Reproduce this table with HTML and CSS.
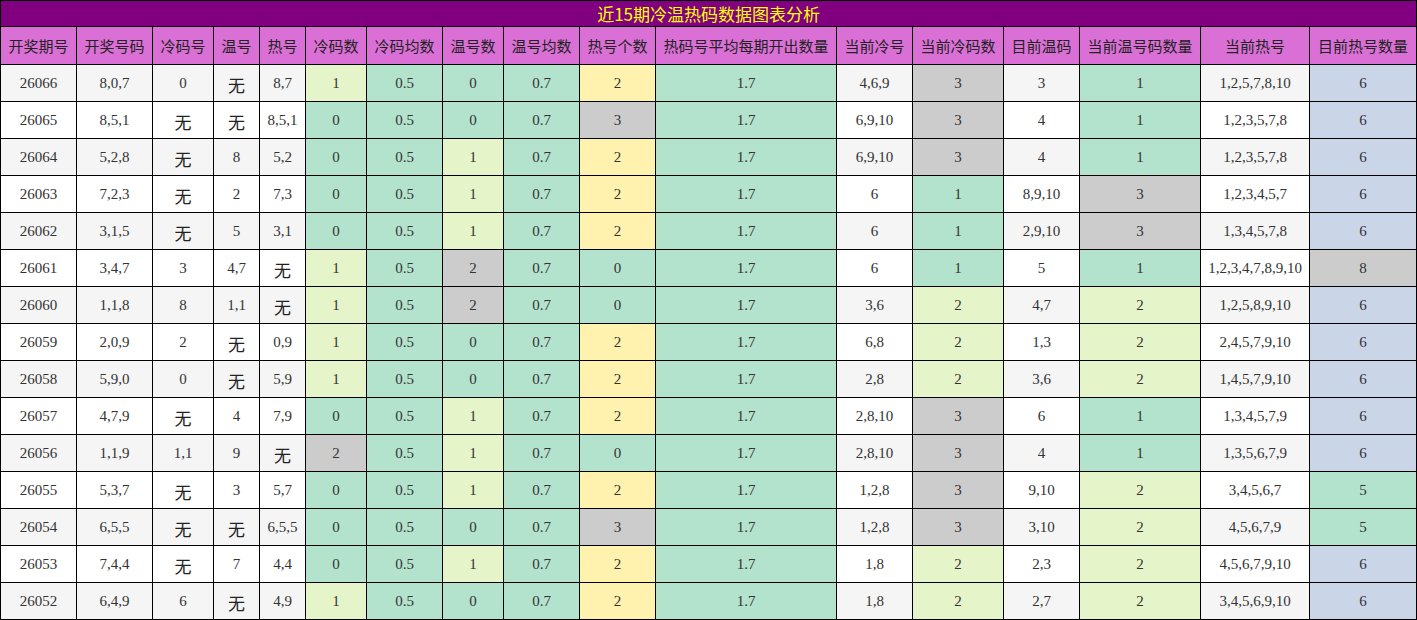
FILE: index.html
```html
<!DOCTYPE html>
<html lang="zh">
<head>
<meta charset="utf-8">
<title>近15期冷温热码数据图表分析</title>
<link rel="stylesheet" href="styles.css">
</head>
<body>
<table class="chart">
<colgroup>
<col class="w76"><col class="w76"><col class="w61"><col class="w46"><col class="w46"><col class="w61"><col class="w76"><col class="w61"><col class="w76"><col class="w76"><col class="w181"><col class="w76"><col class="w91"><col class="w76"><col class="w121"><col class="w109"><col class="w107">
</colgroup>
<thead>
<tr class="title"><th colspan="17">近15期冷温热码数据图表分析</th></tr>
<tr class="head">
<th>开奖期号</th><th>开奖号码</th><th>冷码号</th><th>温号</th><th>热号</th><th>冷码数</th><th>冷码均数</th><th>温号数</th><th>温号均数</th><th>热号个数</th><th>热码号平均每期开出数量</th><th>当前冷号</th><th>当前冷码数</th><th>目前温码</th><th>当前温号码数量</th><th>当前热号</th><th>目前热号数量</th>
</tr>
</thead>
<tbody>
<tr class="odd"><td>26066</td><td>8,0,7</td><td>0</td><td class="none">无</td><td>8,7</td><td class="g">1</td><td class="m">0.5</td><td class="m">0</td><td class="m">0.7</td><td class="y">2</td><td class="m">1.7</td><td>4,6,9</td><td class="k">3</td><td>3</td><td class="m">1</td><td>1,2,5,7,8,10</td><td class="b">6</td></tr>
<tr><td>26065</td><td>8,5,1</td><td class="none">无</td><td class="none">无</td><td>8,5,1</td><td class="m">0</td><td class="m">0.5</td><td class="m">0</td><td class="m">0.7</td><td class="k">3</td><td class="m">1.7</td><td>6,9,10</td><td class="k">3</td><td>4</td><td class="m">1</td><td>1,2,3,5,7,8</td><td class="b">6</td></tr>
<tr class="odd"><td>26064</td><td>5,2,8</td><td class="none">无</td><td>8</td><td>5,2</td><td class="m">0</td><td class="m">0.5</td><td class="g">1</td><td class="m">0.7</td><td class="y">2</td><td class="m">1.7</td><td>6,9,10</td><td class="k">3</td><td>4</td><td class="m">1</td><td>1,2,3,5,7,8</td><td class="b">6</td></tr>
<tr><td>26063</td><td>7,2,3</td><td class="none">无</td><td>2</td><td>7,3</td><td class="m">0</td><td class="m">0.5</td><td class="g">1</td><td class="m">0.7</td><td class="y">2</td><td class="m">1.7</td><td>6</td><td class="m">1</td><td>8,9,10</td><td class="k">3</td><td>1,2,3,4,5,7</td><td class="b">6</td></tr>
<tr class="odd"><td>26062</td><td>3,1,5</td><td class="none">无</td><td>5</td><td>3,1</td><td class="m">0</td><td class="m">0.5</td><td class="g">1</td><td class="m">0.7</td><td class="y">2</td><td class="m">1.7</td><td>6</td><td class="m">1</td><td>2,9,10</td><td class="k">3</td><td>1,3,4,5,7,8</td><td class="b">6</td></tr>
<tr><td>26061</td><td>3,4,7</td><td>3</td><td>4,7</td><td class="none">无</td><td class="g">1</td><td class="m">0.5</td><td class="k">2</td><td class="m">0.7</td><td class="m">0</td><td class="m">1.7</td><td>6</td><td class="m">1</td><td>5</td><td class="m">1</td><td>1,2,3,4,7,8,9,10</td><td class="k">8</td></tr>
<tr class="odd"><td>26060</td><td>1,1,8</td><td>8</td><td>1,1</td><td class="none">无</td><td class="g">1</td><td class="m">0.5</td><td class="k">2</td><td class="m">0.7</td><td class="m">0</td><td class="m">1.7</td><td>3,6</td><td class="g">2</td><td>4,7</td><td class="g">2</td><td>1,2,5,8,9,10</td><td class="b">6</td></tr>
<tr><td>26059</td><td>2,0,9</td><td>2</td><td class="none">无</td><td>0,9</td><td class="g">1</td><td class="m">0.5</td><td class="m">0</td><td class="m">0.7</td><td class="y">2</td><td class="m">1.7</td><td>6,8</td><td class="g">2</td><td>1,3</td><td class="g">2</td><td>2,4,5,7,9,10</td><td class="b">6</td></tr>
<tr class="odd"><td>26058</td><td>5,9,0</td><td>0</td><td class="none">无</td><td>5,9</td><td class="g">1</td><td class="m">0.5</td><td class="m">0</td><td class="m">0.7</td><td class="y">2</td><td class="m">1.7</td><td>2,8</td><td class="g">2</td><td>3,6</td><td class="g">2</td><td>1,4,5,7,9,10</td><td class="b">6</td></tr>
<tr><td>26057</td><td>4,7,9</td><td class="none">无</td><td>4</td><td>7,9</td><td class="m">0</td><td class="m">0.5</td><td class="g">1</td><td class="m">0.7</td><td class="y">2</td><td class="m">1.7</td><td>2,8,10</td><td class="k">3</td><td>6</td><td class="m">1</td><td>1,3,4,5,7,9</td><td class="b">6</td></tr>
<tr class="odd"><td>26056</td><td>1,1,9</td><td>1,1</td><td>9</td><td class="none">无</td><td class="k">2</td><td class="m">0.5</td><td class="g">1</td><td class="m">0.7</td><td class="m">0</td><td class="m">1.7</td><td>2,8,10</td><td class="k">3</td><td>4</td><td class="m">1</td><td>1,3,5,6,7,9</td><td class="b">6</td></tr>
<tr><td>26055</td><td>5,3,7</td><td class="none">无</td><td>3</td><td>5,7</td><td class="m">0</td><td class="m">0.5</td><td class="g">1</td><td class="m">0.7</td><td class="y">2</td><td class="m">1.7</td><td>1,2,8</td><td class="k">3</td><td>9,10</td><td class="g">2</td><td>3,4,5,6,7</td><td class="m">5</td></tr>
<tr class="odd"><td>26054</td><td>6,5,5</td><td class="none">无</td><td class="none">无</td><td>6,5,5</td><td class="m">0</td><td class="m">0.5</td><td class="m">0</td><td class="m">0.7</td><td class="k">3</td><td class="m">1.7</td><td>1,2,8</td><td class="k">3</td><td>3,10</td><td class="g">2</td><td>4,5,6,7,9</td><td class="m">5</td></tr>
<tr><td>26053</td><td>7,4,4</td><td class="none">无</td><td>7</td><td>4,4</td><td class="m">0</td><td class="m">0.5</td><td class="g">1</td><td class="m">0.7</td><td class="y">2</td><td class="m">1.7</td><td>1,8</td><td class="g">2</td><td>2,3</td><td class="g">2</td><td>4,5,6,7,9,10</td><td class="b">6</td></tr>
<tr class="odd"><td>26052</td><td>6,4,9</td><td>6</td><td class="none">无</td><td>4,9</td><td class="g">1</td><td class="m">0.5</td><td class="m">0</td><td class="m">0.7</td><td class="y">2</td><td class="m">1.7</td><td>1,8</td><td class="g">2</td><td>2,7</td><td class="g">2</td><td>3,4,5,6,9,10</td><td class="b">6</td></tr>
</tbody>
</table>
</body>
</html>
```

FILE: styles.css
```css
html, body {
  margin: 0;
  padding: 0;
  background: #ffffff;
}

.chart {
  width: 1417px;
  border-collapse: collapse;
  table-layout: fixed;
  font-family: "Liberation Serif", "Noto Sans CJK SC", serif;
  font-size: 15px;
  color: #333333;
}

.w46 { width: 46px; }
.w61 { width: 61px; }
.w76 { width: 76px; }
.w91 { width: 91px; }
.w107 { width: 107px; }
.w109 { width: 109px; }
.w121 { width: 121px; }
.w181 { width: 181px; }

.chart th,
.chart td {
  border: 1px solid #000000;
  padding: 0;
  text-align: center;
  vertical-align: middle;
  white-space: nowrap;
  overflow: hidden;
}

.title th {
  height: 25px;
  background: #800080;
  color: #ffff00;
  font-family: "Noto Sans CJK SC", sans-serif;
  font-weight: normal;
  font-size: 17px;
  line-height: 25px;
}

.head th {
  height: 37px;
  background: #da70d6;
  color: #222222;
  font-family: "Noto Sans CJK SC", sans-serif;
  font-weight: normal;
  font-size: 15px;
}

.chart tbody td {
  height: 36px;
  background: #ffffff;
}

.chart tbody tr.odd td {
  background: #f5f5f5;
}

.chart tbody td.none {
  font-family: "Noto Sans CJK SC", sans-serif;
  font-size: 17px;
  padding-top: 3px;
  height: 33px;
  color: #222222;
}

.chart tbody td.g, .chart tbody tr.odd td.g { background: #e6f5c9; }
.chart tbody td.m, .chart tbody tr.odd td.m { background: #b3e2cd; }
.chart tbody td.k, .chart tbody tr.odd td.k { background: #cccccc; }
.chart tbody td.y, .chart tbody tr.odd td.y { background: #fff2ae; }
.chart tbody td.b, .chart tbody tr.odd td.b { background: #cbd5e8; }
```
